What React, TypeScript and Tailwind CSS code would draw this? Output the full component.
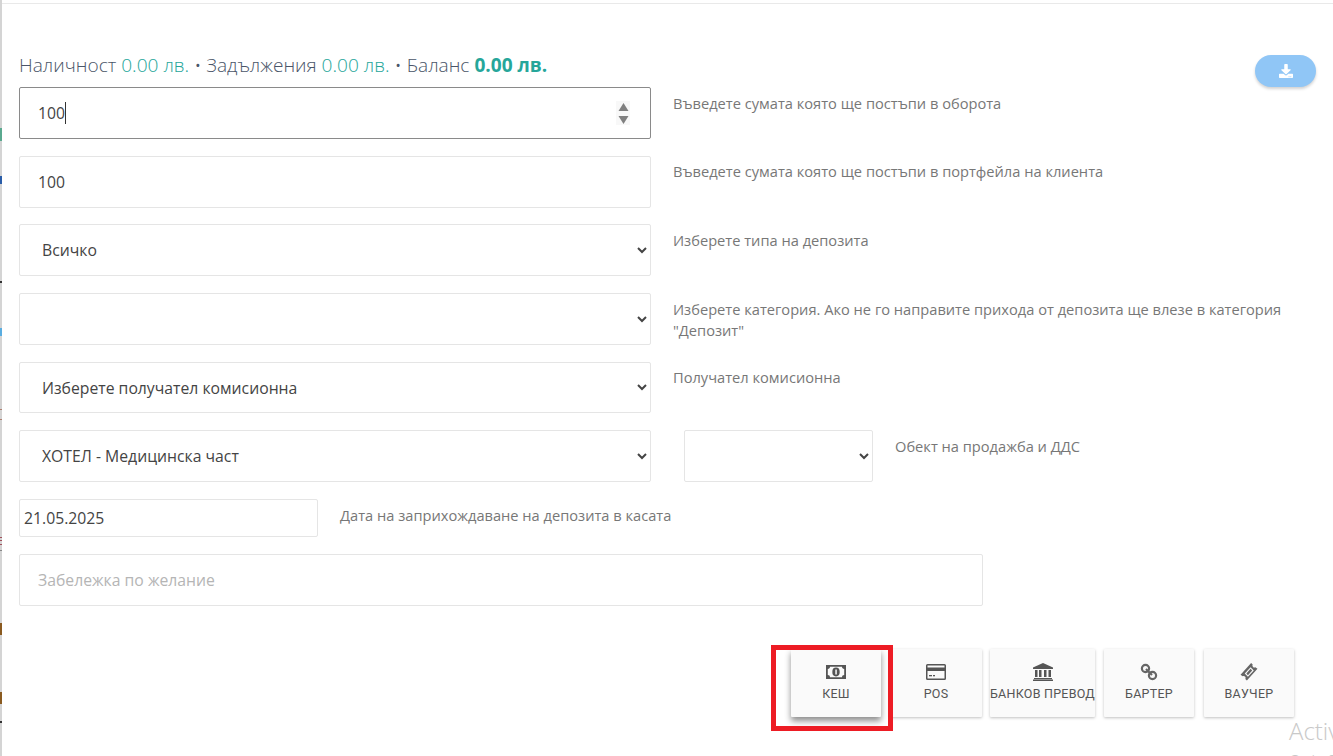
import React from "react";
import { FaDownload } from "react-icons/fa";

function Money() {
  return (
    <svg width="20" height="14" viewBox="0 0 20 14" fill="#555">
      <path fillRule="evenodd" d="M0 0h20v14H0zM4 1.800c0 1.300-.9 2.200-2.200 2.200v6c1.300 0 2.200.9 2.200 2.200h12c0-1.300.9-2.200 2.200-2.200V4c-1.300 0-2.200-.9-2.200-2.200z" />
      <ellipse cx="10" cy="7" rx="3.700" ry="4.400" />
      <rect x="9.300" y="4.500" width="1.500" height="5" fill="#fafafa" />
    </svg>
  );
}
function Card() {
  return (
    <svg width="20" height="16" viewBox="0 0 20 16" fill="#555">
      <path fillRule="evenodd" d="M1.500 0h17A1.500 1.500 0 0 1 20 1.500v13a1.500 1.500 0 0 1-1.500 1.500h-17A1.500 1.500 0 0 1 0 14.500v-13A1.500 1.500 0 0 1 1.500 0zM1.500 7v7.500h17V7zM1.500 1.500V3.500h17V1.500z" />
      <rect x="3" y="11" width="3" height="1.300" />
      <rect x="7" y="11" width="2" height="1.300" />
    </svg>
  );
}
function Bank() {
  return (
    <svg width="20" height="18" viewBox="0 0 20 18" fill="#555">
      <path d="M10 0l10 4.500V6H0V4.500z" />
      <rect x="2" y="7" width="2.500" height="7" />
      <rect x="6" y="7" width="2.500" height="7" />
      <rect x="11" y="7" width="2.500" height="7" />
      <rect x="15.500" y="7" width="2.500" height="7" />
      <rect x="1" y="15" width="18" height="1.200" />
      <rect x="0" y="16.500" width="20" height="1.500" />
    </svg>
  );
}
function Chain() {
  return (
    <svg width="18" height="18" viewBox="0 0 18 18" fill="none" stroke="#666" strokeWidth="2.200">
      <circle cx="5.500" cy="5.500" r="3.600" />
      <circle cx="12.500" cy="12.500" r="3.600" />
      <path d="M6 6l6 6" />
    </svg>
  );
}
function Ticket() {
  return (
    <svg width="18" height="18" viewBox="0 0 16 17" fill="#666">
      <path d="M10 0l1.500 1.500c-.5.800-.3 1.600.3 2.200s1.400.8 2.200.3L16 5.500 6 16.500l-1.500-1.500c.5-.8.3-1.600-.3-2.200s-1.400-.8-2.200-.3L0 11z" />
      <path d="M9.500 4l3 3-5.500 6-3-3z" fill="#fafafa" />
      <path d="M9.500 5.500l1.500 1.500-4 4.500-1.500-1.500z" />
    </svg>
  );
}

function Row({ children, label }: { children: React.ReactNode; label?: React.ReactNode }) {
  return (
    <div className="flex items-start h-[51.88px] mb-[16.77px]">
      <div className="w-[632px] h-full shrink-0 relative">{children}</div>
      {label}
    </div>
  );
}

function Help({ children, className = "ml-[22px]" }: { children: React.ReactNode; className?: string }) {
  return <p className={`mt-[5.7px] text-[14.65px] leading-[21px] text-[#777] ${className}`}>{children}</p>;
}

const field =
  "w-full h-full bg-white border border-[#e5e5e5] rounded-[2px] text-[15.75px] text-[#444] outline-none [font-family:'Open_Sans',sans-serif]";

function Select({ value }: { value: string }) {
  return (
    <select defaultValue={value} className={`${field} pl-[18px] pr-[4px]`}>
      <option value={value}>{value}</option>
    </select>
  );
}

function PayButton({ icon, label, className = "" }: { icon: React.ReactNode; label: string; className?: string }) {
  return (
    <div
      className={`h-[68px] bg-[#fafafa] flex flex-col items-center rounded-[1px] [font-family:Roboto,sans-serif] font-normal text-[12.5px] tracking-[0.25px] text-[#555] whitespace-nowrap ${className}`}
    >
      <div className="h-[18px] mt-[14px] mb-[4px] flex items-center">{icon}</div>
      <span className="leading-[18px]">{label}</span>
    </div>
  );
}

const shadow = "shadow-[0_1px_3px_rgba(0,0,0,0.25)]";

function Tick({ className }: { className: string }) {
  return <div className={`absolute w-full ${className}`} />;
}

export default function App() {
  return (
    <div className="relative w-[1333px] h-[756px] overflow-hidden bg-white [font-family:'Open_Sans',sans-serif]">
      {/* page behind the modal, peeking through on the far left */}
      <div className="absolute left-0 top-0 bottom-0 w-[2px] bg-[#d4d4d4]">
        <Tick className="top-[128px] h-[13px] bg-[#5aa98f]" />
        <Tick className="top-[176px] h-[8px] bg-[#2a5da8]" />
        <Tick className="top-[281px] h-[2px] bg-[#333]" />
        <Tick className="top-[328px] h-[8px] bg-[#5aade0]" />
        <Tick className="top-[409px] h-px bg-[#b08070]" />
        <Tick className="top-[419px] h-px bg-[#b08070]" />
        <Tick className="top-[537px] h-px bg-[#a0505a]" />
        <Tick className="top-[540px] h-px bg-[#a0505a]" />
        <Tick className="top-[544px] h-px bg-[#a0505a]" />
        <Tick className="top-[550px] h-px bg-[#888]" />
        <Tick className="top-[623px] h-[12px] bg-[#8a5a20]" />
        <Tick className="top-[692px] h-[12px] bg-[#8a5a20]" />
        <Tick className="top-[721px] h-[2px] bg-[#333]" />
      </div>

      <div className="ml-[2px] h-[4px] border-b border-[#e9e9e9]" />

      <div className="pl-[19px] pr-[17px]">
        <div className="flex justify-between items-start h-[83px]">
          <p className="mt-[47px] text-[19.1px] leading-[28px] font-light text-[#4a5568] whitespace-nowrap">
            Наличност <span className="text-[#26a69a]">0.00 лв.</span> • Задължения{" "}
            <span className="text-[#26a69a]">0.00 лв.</span> • Баланс{" "}
            <span className="font-bold text-[#26a69a]">0.00 лв.</span>
          </p>
          <div className="mt-[51px] w-[61px] h-[32px] rounded-full bg-[#90c6f6] shadow-[0_2px_3px_rgba(0,0,0,0.18)] flex items-center justify-center">
            <FaDownload className="text-white text-[14px]" />
          </div>
        </div>

        <Row label={<Help>Въведете сумата която ще постъпи в оборота</Help>}>
          <input readOnly value="100" className={`${field} !border-[#8a8a8a] pl-[18px]`} />
          <div className="absolute left-[46px] top-[15px] w-px h-[22px] bg-[#333]" />
          <div className="absolute right-[21px] top-[14px] w-[14px] h-[24px] bg-[#f8f8f8] flex items-center justify-center">
            <svg width="11" height="21" viewBox="0 0 11 21" fill="#808080">
              <path d="M5.500 0l5 8H.5z" />
              <path d="M.5 13h10l-5 8z" />
            </svg>
          </div>
        </Row>

        <Row label={<Help>Въведете сумата която ще постъпи в портфейла на клиента</Help>}>
          <input readOnly value="100" className={`${field} pl-[18px]`} />
        </Row>

        <Row label={<Help>Изберете типа на депозита</Help>}>
          <Select value="Всичко" />
        </Row>

        <Row
          label={
            <Help>
              Изберете категория. Ако не го направите прихода от депозита ще влезе в категория
              <br />
              "Депозит"
            </Help>
          }
        >
          <Select value="" />
        </Row>

        <Row label={<Help>Получател комисионна</Help>}>
          <Select value="Изберете получател комисионна" />
        </Row>

        <div className="flex items-start h-[51.88px] mb-[16.77px]">
          <div className="w-[632px] h-full shrink-0">
            <Select value="ХОТЕЛ - Медицинска част" />
          </div>
          <div className="w-[189px] h-full ml-[33px] shrink-0">
            <Select value="" />
          </div>
          <Help className="ml-[22px]">Обект на продажба и ДДС</Help>
        </div>

        <div className="flex items-start h-[38px] mb-[17px]">
          <input readOnly value="21.05.2025" className={`${field} !w-[299px] !h-[38px] pl-[4px] shrink-0`} />
          <Help className="ml-[22px]">Дата на заприхождаване на депозита в касата</Help>
        </div>

        <input
          readOnly
          placeholder="Забележка по желание"
          className={`${field} !w-[964px] !h-[52px] pl-[18px] placeholder:text-[#b5b5b5] block`}
        />

        <div className="mt-[43px] ml-[772px] flex items-start">
          <PayButton
            className="w-[90px] shadow-[0_4px_6px_rgba(0,0,0,0.45)]"
            icon={<Money />}
            label="КЕШ"
          />
          <PayButton className={`ml-[9px] w-[92px] ${shadow}`} icon={<Card />} label="POS" />
          <PayButton className={`ml-[8px] w-[105px] ${shadow}`} icon={<Bank />} label="БАНКОВ ПРЕВОД" />
          <PayButton className={`ml-[9px] w-[90px] ${shadow}`} icon={<Chain />} label="БАРТЕР" />
          <PayButton className={`ml-[10px] w-[90px] ${shadow}`} icon={<Ticket />} label="ВАУЧЕР" />
        </div>
      </div>

      {/* annotation frame drawn over the screenshot */}
      <div className="absolute left-[771px] top-[645px] w-[122px] h-[86px] border-[5px] border-[#ed1c24]" />

      <div className="absolute left-[1289px] top-[714px] text-[24px] leading-[33px] text-[#c9c9c9] whitespace-nowrap font-light">
        Activate Windows
      </div>
      <div className="absolute left-[1289px] top-[752px] text-[14px] leading-[16px] text-[#c9c9c9] whitespace-nowrap">
        Go to Settings
      </div>
    </div>
  );
}
